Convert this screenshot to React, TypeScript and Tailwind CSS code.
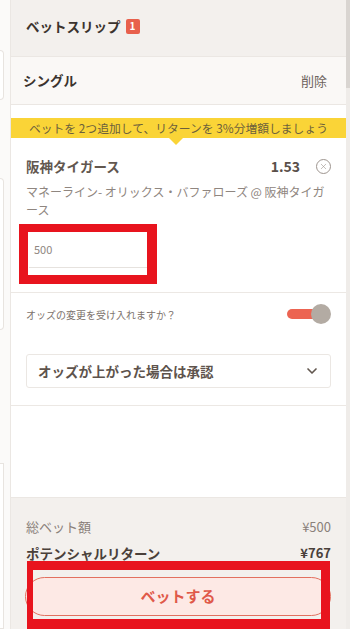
import { ChevronDown, X } from "lucide-react";

const font = { fontFamily: '"Noto Sans CJK JP", "Noto Sans", sans-serif' };

function Toggle() {
  return (
    <div className="relative w-[44px] h-[20px] flex items-center">
      <div className="w-[36px] h-[10px] rounded-full bg-[#ec6452]" />
      <div className="absolute right-0 top-0 w-[20px] h-[20px] rounded-full bg-[#b3aba3]" />
    </div>
  );
}

export default function App() {
  return (
    <div className="relative w-[350px] h-[629px] flex overflow-hidden bg-white" style={font}>
      {/* page behind the slip */}
      <div className="w-[10px] shrink-0 bg-[#fbfaf9] flex flex-col">
        <div className="mt-[50px] h-[50px] w-[4px] border border-l-0 border-[#e8e4e0] rounded-r-sm bg-white" />
        <div className="mt-[78px] h-[152px] w-[4px] border border-l-0 border-[#e8e4e0] rounded-r-sm bg-white" />
        <div className="mt-[133px] flex-1 w-[4px] border border-l-0 border-[#e8e4e0] bg-white" />
      </div>

      <div className="w-[336px] shrink-0 flex flex-col border-l border-[#ebe7e3]">
        <div className="h-[57px] shrink-0 bg-[#f3f0ed] border-b border-[#ebe7e3] flex items-center pl-[15px] pb-[4px] gap-[5px]">
          <span className="text-[13.5px] font-bold text-[#3b332e]">ベットスリップ</span>
          <span className="w-[14px] h-[15px] rounded-[2px] bg-[#e8604c] text-white text-[10px] font-bold flex items-center justify-center leading-none">
            1
          </span>
        </div>

        <div className="h-[48px] shrink-0 bg-[#faf8f6] border-b border-[#ebe7e3] flex items-center justify-between pl-[12px] pr-[19px]">
          <span className="text-[13.5px] font-bold text-[#3b332e]">シングル</span>
          <span className="text-[13px] text-[#6d635d]">削除</span>
        </div>

        <div className="flex-1 flex flex-col bg-white">
          <div className="mt-[13px] h-[20px] bg-[#fad437] flex items-center justify-center text-[11.8px] text-[#6c5f3c]">
            ベットを 2つ追加して、リターンを 3%分増額しましょう
          </div>
          <div className="h-0 flex justify-center pr-[6px]">
            <div className="w-0 h-0 border-l-[7px] border-r-[7px] border-t-[7px] border-l-transparent border-r-transparent border-t-[#fad437]" />
          </div>

          <div className="px-[15px] pt-[18px]">
            <div className="flex items-center h-[20px]">
              <span className="flex-1 text-[13.5px] font-bold text-[#62574f]">阪神タイガース</span>
              <span className="text-[14px] font-bold text-[#5a504a]">1.53</span>
              <span className="ml-[16px] w-[15px] h-[15px] rounded-full border border-[#9e958f] flex items-center justify-center">
                <X size={9} strokeWidth={1.6} className="text-[#9e958f]" />
              </span>
            </div>
            <p className="mt-[7px] pr-[4px] text-[12px] leading-[18px] text-[#8f8680]">
              マネーライン- オリックス・バファローズ @ 阪神タイガース
            </p>
            <div className="mt-[13px] ml-[3px] w-[119px] h-[43px]">
              <div className="h-[36px] border-b border-[#e6e2de] flex items-center pl-[5px] text-[11px] text-[#8f8680]">
                500
              </div>
            </div>
          </div>

          <div className="mt-[17px] border-t border-[#ece8e4] px-[15px]">
            <div className="h-[42px] flex items-center justify-between">
              <span className="text-[10px] text-[#7c726c]">オッズの変更を受け入れますか？</span>
              <Toggle />
            </div>
            <div className="mt-[19px] h-[34px] border border-[#ebe7e3] rounded-[3px] flex items-center justify-between pl-[11px] pr-[10px]">
              <span className="text-[13.5px] font-bold text-[#5e534c]">オッズが上がった場合は承認</span>
              <ChevronDown size={16} strokeWidth={2.5} className="text-[#62574f]" />
            </div>
          </div>

          <div className="mt-[17px] border-t border-[#ece8e4] flex-1" />
        </div>

        <div className="h-[132px] shrink-0 bg-[#f3f0ed] border-t border-[#ebe7e3] px-[15px] pt-[19px]">
          <div className="flex items-center justify-between h-[20px] text-[13px] text-[#8a807a]">
            <span>総ベット額</span>
            <span>¥500</span>
          </div>
          <div className="mt-[6px] flex items-center justify-between h-[20px] text-[#4a403a] font-bold">
            <span className="text-[13.5px]">ポテンシャルリターン</span>
            <span className="text-[13px]">¥767</span>
          </div>
          <button className="mt-[14px] -mx-[1px] w-[306px] h-[39px] rounded-full bg-[#fde9e5] border border-[#e2705f] text-[#e0594a] text-[15px] font-bold flex items-center justify-center">
            ベットする
          </button>
        </div>
      </div>

      <div className="w-[4px] shrink-0 flex flex-col bg-[#efece9]">
        <div className="h-[88px] bg-[#d9d5d1]" />
      </div>

      {/* red highlight annotations */}
      <div className="absolute left-[19px] top-[224px] w-[138px] h-[60px] border-l-[9px] border-t-[8px] border-r-[10px] border-b-[9px] border-[#e8141e] pointer-events-none" />
      <div className="absolute left-[27px] top-[561px] w-[303px] h-[80px] border-l-[6px] border-t-[9px] border-r-[9px] border-b-[10px] border-[#e8141e] pointer-events-none" />
      <div className="absolute left-[27px] top-[619px] w-[303px] h-[10px] bg-[#e8141e] pointer-events-none" />
    </div>
  );
}
